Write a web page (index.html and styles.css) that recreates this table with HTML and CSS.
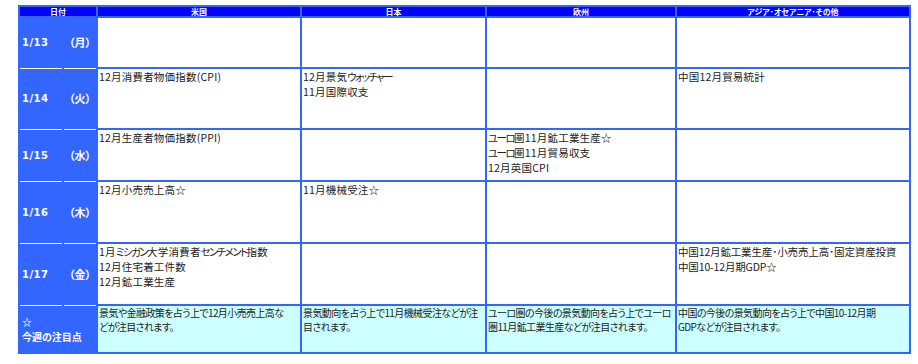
FILE: index.html
```html
<!DOCTYPE html>
<html lang="ja">
<head>
<meta charset="utf-8">
<title>今週の主要経済指標</title>
<link rel="stylesheet" href="styles.css">
</head>
<body>
<table class="schedule">
  <colgroup>
    <col class="c-date">
    <col class="c-dow">
    <col class="c-us">
    <col class="c-jp">
    <col class="c-eu">
    <col class="c-asia">
  </colgroup>
  <thead>
    <tr class="r-head">
      <th colspan="2">日付</th>
      <th>米国</th>
      <th>日本</th>
      <th>欧州</th>
      <th>アジア･オセアニア･その他</th>
    </tr>
  </thead>
  <tbody>
    <tr class="r1">
      <td class="date">1/13</td>
      <td class="dow">（月）</td>
      <td></td>
      <td></td>
      <td></td>
      <td></td>
    </tr>
    <tr class="r2">
      <td class="date">1/14</td>
      <td class="dow">（火）</td>
      <td>12月消費者物価指数(CPI)</td>
      <td>12月景気<span class="kana">ウォッチャー</span><br>11月国際収支</td>
      <td></td>
      <td>中国12月貿易統計</td>
    </tr>
    <tr class="r3">
      <td class="date">1/15</td>
      <td class="dow">（水）</td>
      <td>12月生産者物価指数(PPI)</td>
      <td></td>
      <td><span class="kana">ユーロ</span>圏11月鉱工業生産☆<br><span class="kana">ユーロ</span>圏11月貿易収支<br>12月英国CPI</td>
      <td></td>
    </tr>
    <tr class="r4">
      <td class="date">1/16</td>
      <td class="dow">（木）</td>
      <td>12月小売売上高☆</td>
      <td>11月機械受注☆</td>
      <td></td>
      <td></td>
    </tr>
    <tr class="r5">
      <td class="date">1/17</td>
      <td class="dow">（金）</td>
      <td>1月<span class="kana">ミシガン</span>大学消費者<span class="kana">センチメント</span>指数<br>12月住宅着工件数<br>12月鉱工業生産</td>
      <td></td>
      <td></td>
      <td class="tight">中国12月鉱工業生産･小売売上高･固定資産投資<br>中国10-12月期GDP☆</td>
    </tr>
    <tr class="r6">
      <td class="focus-label" colspan="2">☆<br>今週の注目点</td>
      <td class="focus">景気や金融政策を占う上で12月小売売上高な<br>どが注目されます。</td>
      <td class="focus">景気動向を占う上で11月機械受注などが注<br>目されます。</td>
      <td class="focus">ユーロ圏の今後の景気動向を占う上でユーロ<br>圏11月鉱工業生産などが注目されます。</td>
      <td class="focus">中国の今後の景気動向を占う上で中国10-12月期<br>GDPなどが注目されます。</td>
    </tr>
  </tbody>
</table>
</body>
</html>
```

FILE: styles.css
```css
html, body {
  margin: 0;
  padding: 0;
  background: #ffffff;
}

body {
  font-family: "Noto Sans CJK JP", "Noto Sans", sans-serif;
}

.schedule {
  margin: 5px 0 0 18px;
  width: 893px;
  table-layout: fixed;
  border-collapse: separate;
  border-spacing: 2px;
  background: #3366ff;
  font-feature-settings: "palt";
}

.c-date { width: 42px; }
.c-dow { width: 32px; }
.c-us { width: 202px; }
.c-jp { width: 183px; }
.c-eu { width: 188px; }
.c-asia { width: 232px; }

.schedule th,
.schedule td {
  box-sizing: border-box;
  padding: 0;
}

.schedule th {
  background: #0000ff;
  color: #ffffff;
  font-size: 8px;
  font-weight: bold;
  line-height: 9px;
  text-align: center;
  white-space: nowrap;
  overflow: hidden;
}

.schedule td {
  background: #ffffff;
  color: #222222;
  font-size: 10.5px;
  line-height: 15px;
  letter-spacing: 0.2px;
  vertical-align: top;
  text-align: left;
  padding: 0 0 0 1px;
  white-space: nowrap;
}

.schedule td .kana {
  letter-spacing: -1.6px;
}

.schedule td.tight {
  letter-spacing: -0.15px;
}

.r-head { height: 9px; }
.r1 { height: 49px; }
.r2 { height: 59px; }
.r3 { height: 50px; }
.r4 { height: 60px; }
.r5 { height: 60px; }
.r6 { height: 46px; }

.schedule td.date,
.schedule td.dow {
  background: #3366ff;
  color: #ffffff;
  font-weight: bold;
  vertical-align: middle;
  padding: 0;
  box-shadow: 0 1px 0 #3366ff, 0 2px 0 #ffffff;
}

.schedule td.date {
  font-family: "DejaVu Sans", sans-serif;
  font-size: 10px;
  letter-spacing: 0.5px;
  padding-left: 2px;
}

.schedule td.dow {
  font-size: 11px;
  letter-spacing: 0;
  text-align: center;
  overflow: visible;
}

.schedule td.focus-label {
  background: #3366ff;
  color: #ffffff;
  font-weight: bold;
  font-size: 10px;
  line-height: 15px;
  letter-spacing: 0;
  vertical-align: middle;
  padding: 0 0 0 2px;
}

.schedule td.focus {
  background: #ccffff;
  font-size: 10px;
  line-height: 14px;
  letter-spacing: -0.6px;
  padding: 0 0 0 1px;
}
```
